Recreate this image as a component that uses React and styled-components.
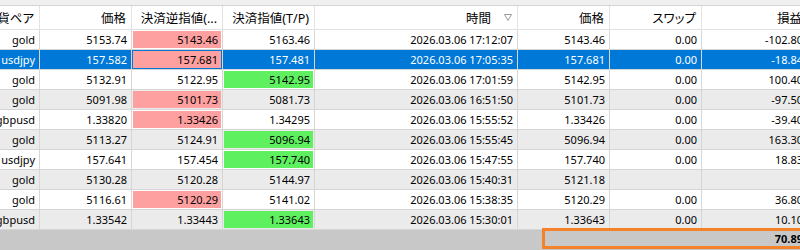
import React from "react";
import styled, { createGlobalStyle } from "styled-components";

const GlobalStyle = createGlobalStyle`
  html, body {
    margin: 0;
    padding: 0;
    background: #ffffff;
  }
  * {
    box-sizing: border-box;
  }
`;

// column widths incl. 1px right grid line; first column is scrolled 12px out of view
const COLUMNS = "52px 92px 91px 92px 203px 92px 92px 106px";

const Viewport = styled.div`
  width: 800px;
  height: 250px;
  overflow: hidden;
  font-family: "Noto Sans", "Noto Sans CJK JP", sans-serif;
  color: #000;
`;

const TopStrip = styled.div`
  height: 6px;
  background: #f0f0f0;
  border-bottom: 1px solid #d4d4d4;
`;

const Grid = styled.div`
  display: grid;
  grid-template-columns: ${COLUMNS};
  width: max-content;
  margin-left: -12px;
`;

const HeadCell = styled.div`
  height: 24px;
  display: flex;
  align-items: center;
  justify-content: flex-end;
  gap: 13px;
  padding-right: 5px;
  background: #fff;
  border-right: 1px solid #e3e3e3;
  border-bottom: 1px solid #e0e0e0;
  font-family: "Noto Sans", "Noto Sans CJK JP", sans-serif;
  font-feature-settings: "palt";
  font-size: 12.5px;
  white-space: nowrap;
  overflow: hidden;
`;

const Cell = styled.div`
  height: 20px;
  padding: 1px;
  background: ${(p) => (p.$selected ? "#0078d7" : p.$odd ? "#ebebeb" : "#ffffff")};
  border-right: 1px solid #d6d6d6;
  border-bottom: 1px solid #d6d6d6;
  overflow: hidden;
`;

const Value = styled.div`
  height: 100%;
  display: flex;
  align-items: center;
  justify-content: flex-end;
  padding-right: 3px;
  font-size: 11px;
  white-space: nowrap;
  background: ${(p) => (p.$mark === "sl" ? "#ffa0a0" : p.$mark === "tp" ? "#5ff05f" : "transparent")};
  color: ${(p) => (p.$selected && !p.$mark ? "#ffffff" : "#000000")};
`;

const Footer = styled.div`
  height: 20px;
  display: flex;
  background: #c8c8c8;
`;

const TotalBox = styled.div`
  flex: none;
  width: 265px;
  height: 21px;
  margin-left: 542px;
  margin-top: -2px;
  border: 3px solid #f5812a;
  display: flex;
  align-items: center;
  justify-content: flex-end;
  padding-right: 1px;
  font-size: 11px;
  font-weight: 700;
`;

const SortMark = () => (
  <svg width="8" height="7" viewBox="0 0 8 7">
    <path d="M0.5 0.5 H7.5 L4 6.5 Z" fill="none" stroke="#9a9a9a" strokeWidth="1" />
  </svg>
);

const headers = [
  "通貨ペア",
  "価格",
  "決済逆指値(...",
  "決済指値(T/P)",
  "時間",
  "価格",
  "スワップ",
  "損益",
];

// [symbol, open, sl, tp, time, price, swap, profit, marked column]
const rows = [
  ["gold", "5153.74", "5143.46", "5163.46", "2026.03.06 17:12:07", "5143.46", "0.00", "-102.80", "sl"],
  ["usdjpy", "157.582", "157.681", "157.481", "2026.03.06 17:05:35", "157.681", "0.00", "-18.84", "sl"],
  ["gold", "5132.91", "5122.95", "5142.95", "2026.03.06 17:01:59", "5142.95", "0.00", "100.40", "tp"],
  ["gold", "5091.98", "5101.73", "5081.73", "2026.03.06 16:51:50", "5101.73", "0.00", "-97.50", "sl"],
  ["gbpusd", "1.33820", "1.33426", "1.34295", "2026.03.06 15:55:52", "1.33426", "0.00", "-39.40", "sl"],
  ["gold", "5113.27", "5124.91", "5096.94", "2026.03.06 15:55:45", "5096.94", "0.00", "163.30", "tp"],
  ["usdjpy", "157.641", "157.454", "157.740", "2026.03.06 15:47:55", "157.740", "0.00", "18.83", "tp"],
  ["gold", "5130.28", "5120.28", "5144.97", "2026.03.06 15:40:31", "5121.18", "", "", null],
  ["gold", "5116.61", "5120.29", "5141.02", "2026.03.06 15:38:35", "5120.29", "0.00", "36.80", "sl"],
  ["gbpusd", "1.33542", "1.33443", "1.33643", "2026.03.06 15:30:01", "1.33643", "0.00", "10.10", "tp"],
];

const SELECTED = 1;

const App = () => {
  return (
    <Viewport>
      <GlobalStyle />
      <TopStrip />
      <Grid>
        {headers.map((h, i) => (
          <HeadCell key={"h" + i}>
            {h}
            {i === 4 && <SortMark />}
          </HeadCell>
        ))}
        {rows.map((row, r) =>
          row.slice(0, 8).map((v, c) => {
            const mark = row[8];
            const cellMark =
              (mark === "sl" && c === 2) || (mark === "tp" && c === 3) ? mark : null;
            return (
              <Cell key={r + "-" + c} $odd={r % 2 === 1} $selected={r === SELECTED}>
                <Value $mark={cellMark} $selected={r === SELECTED}>
                  {v}
                </Value>
              </Cell>
            );
          })
        )}
      </Grid>
      <Footer>
        <TotalBox>70.89</TotalBox>
      </Footer>
    </Viewport>
  );
};

export default App;
